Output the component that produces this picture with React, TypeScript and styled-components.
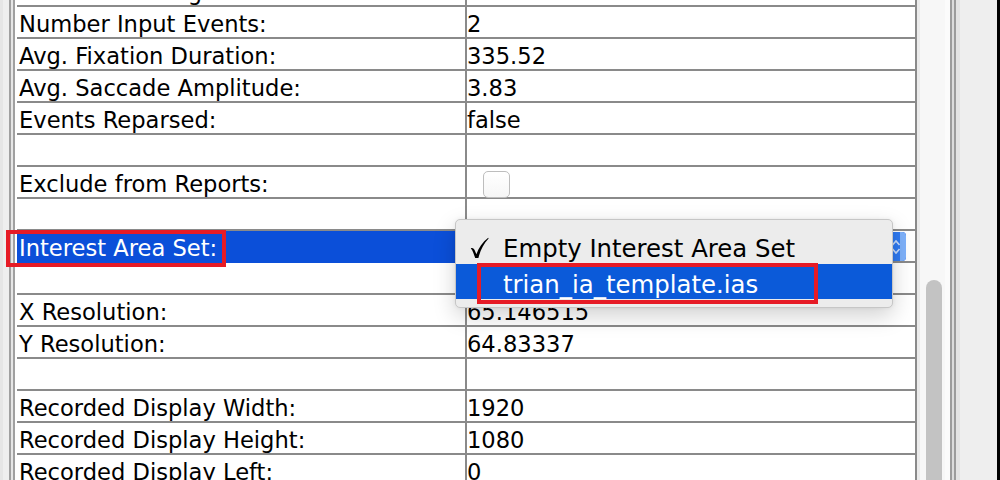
import React from "react";
import styled, { createGlobalStyle } from "styled-components";

const Global = createGlobalStyle`
  html, body { margin: 0; padding: 0; background: #ffffff; }
  body { font-family: "DejaVu Sans", "Liberation Sans", sans-serif; }
`;

const Screen = styled.div`
  position: relative;
  width: 1000px;
  height: 480px;
  overflow: hidden;
  display: flex;
  background: #ffffff;
  font-family: "DejaVu Sans", "Liberation Sans", sans-serif;
`;

const Gutter = styled.div`
  flex: 0 0 17px;
  background: linear-gradient(
    to right,
    #e5e5e5 0 3px,
    #eeeeee 3px 9px,
    #a0a0a0 9px 11px,
    #e6e6e6 11px 13px,
    #a0a0a0 13px 15px,
    #ffffff 15px 17px
  );
`;

const Viewport = styled.div`
  flex: 0 0 900px;
  overflow: hidden;
`;

const Table = styled.div`
  margin-top: -25px;
  display: flex;
  flex-direction: column;
`;

const Row = styled.div`
  display: grid;
  grid-template-columns: 450px 450px;
  height: 32px;
  box-sizing: border-box;
  border-bottom: 2px solid #8a8a8a;
`;

const LabelCell = styled.div<{ $selected?: boolean }>`
  box-sizing: border-box;
  height: 32px;
  margin-bottom: -2px;
  border-right: 2px solid #8a8a8a;
  padding: 2px 0 0 2px;
  font-size: 22.6px;
  line-height: 30px;
  white-space: nowrap;
  overflow: hidden;
  color: ${(p) => (p.$selected ? "#ffffff" : "#000000")};
  background: ${(p) => (p.$selected ? "#0b4fd9" : "transparent")};
`;

const ValueCell = styled.div`
  box-sizing: border-box;
  height: 30px;
  border-right: 2px solid #8a8a8a;
  padding: 2px 0 0 0;
  font-size: 22.6px;
  line-height: 30px;
  white-space: nowrap;
  color: #000000;
  display: flex;
  align-items: flex-start;
`;

const Checkbox = styled.div`
  margin: 2px 0 0 16px;
  width: 27px;
  height: 27px;
  box-sizing: border-box;
  border: 1px solid #bdbdbd;
  border-radius: 5px;
  background: linear-gradient(#ffffff, #f6f6f6);
  position: relative;
  z-index: 1;
`;

const Combo = styled.div`
  margin: -1px 0 0 4px;
  width: 435px;
  height: 29px;
  display: flex;
  border-radius: 4px;
  overflow: hidden;
  background: #0b4fd9;
`;

const ComboBody = styled.div`
  flex: 1;
`;

const ComboArrows = styled.div`
  flex: 0 0 20px;
  display: flex;
  align-items: center;
  justify-content: center;
  background: linear-gradient(to right, #2f7af2 0 70%, #7fb2fb 70% 100%);
`;

const ScrollTrack = styled.div`
  flex: 0 0 33px;
  background: linear-gradient(
    to right,
    #ebebeb 0 3px,
    #f7f7f7 3px 28px,
    #fbfbfb 28px 33px
  );
  display: flex;
  flex-direction: column;
`;

const Thumb = styled.div`
  margin: 280px 0 0 9px;
  width: 16px;
  flex: 1;
  border-radius: 8px 8px 0 0;
  background: #c3c3c3;
`;

const SidePane = styled.div`
  flex: 1;
  background: linear-gradient(
    to right,
    #9c9c9c 0 2px,
    #dcdcdc 2px 4px,
    #9c9c9c 4px 6px,
    #e4e4e4 6px 10px,
    #eeeeee 10px 47px,
    #000000 47px 50px
  );
`;

const Popup = styled.div`
  position: absolute;
  left: 455px;
  top: 219px;
  width: 438px;
  box-sizing: border-box;
  padding: 5px 0 8px;
  background: #ececec;
  border: 1px solid #c6c6c6;
  border-radius: 5px;
  box-shadow: 0 8px 22px rgba(0, 0, 0, 0.18), 0 0 4px rgba(0, 0, 0, 0.06);
  font-family: "DejaVu Sans", "Liberation Sans", sans-serif;
  z-index: 5;
`;

const MenuItem = styled.div<{ $active?: boolean }>`
  display: flex;
  box-sizing: border-box;
  height: ${(p) => (p.$active ? "35px" : "39px")};
  padding: ${(p) => (p.$active ? "3px" : "4px")} 0 0 14px;
  line-height: ${(p) => (p.$active ? "35px" : "39px")};
  font-size: 24.4px;
  white-space: nowrap;
  color: ${(p) => (p.$active ? "#ffffff" : "#000000")};
  background: ${(p) => (p.$active ? "#0b5ad9" : "transparent")};
`;

const CheckSlot = styled.span`
  flex: 0 0 33px;
  display: flex;
  align-items: flex-start;
  padding-top: 8px;
  box-sizing: border-box;
`;

const Annotation = styled.div<{ $l: number; $t: number; $w: number; $h: number }>`
  position: absolute;
  left: ${(p) => p.$l}px;
  top: ${(p) => p.$t}px;
  width: ${(p) => p.$w}px;
  height: ${(p) => p.$h}px;
  box-sizing: border-box;
  border: 4px solid #e61b26;
  z-index: 10;
  pointer-events: none;
`;

type RowData = {
  label?: string;
  value?: string;
  kind?: "checkbox" | "combo";
  selected?: boolean;
};

const rows: RowData[] = [
  { label: "Number Messages:", value: "0" },
  { label: "Number Input Events:", value: "2" },
  { label: "Avg. Fixation Duration:", value: "335.52" },
  { label: "Avg. Saccade Amplitude:", value: "3.83" },
  { label: "Events Reparsed:", value: "false" },
  {},
  { label: "Exclude from Reports:", kind: "checkbox" },
  {},
  { label: "Interest Area Set:", kind: "combo", selected: true },
  {},
  { label: "X Resolution:", value: "65.146515" },
  { label: "Y Resolution:", value: "64.83337" },
  {},
  { label: "Recorded Display Width:", value: "1920" },
  { label: "Recorded Display Height:", value: "1080" },
  { label: "Recorded Display Left:", value: "0" },
];

function Chevrons() {
  return (
    <svg width="10" height="18" viewBox="0 0 10 18">
      <path d="M1.5 7 L5 3 L8.5 7" fill="none" stroke="rgba(255,255,255,0.75)" strokeWidth="1.6" />
      <path d="M1.5 11 L5 15 L8.5 11" fill="none" stroke="rgba(255,255,255,0.75)" strokeWidth="1.6" />
    </svg>
  );
}

function CheckMark() {
  return (
    <svg width="19" height="22" viewBox="0 0 19 22">
      <path
        d="M0.8 11.2 C2.8 10.4 4 11.6 4.8 13.4 L6.4 17.2 C8.8 10.8 12.4 5.4 18.2 0.8 L18.6 1.4 C13.6 6.8 10.4 12.8 8.4 21 L5.2 21 L3.2 15.6 C2.6 13.9 1.9 12.4 0.8 11.2 Z"
        fill="#000000"
      />
    </svg>
  );
}

export default function App() {
  return (
    <>
      <Global />
      <Screen>
        <Gutter />
        <Viewport>
          <Table>
            {rows.map((r, i) => (
              <Row key={i}>
                <LabelCell $selected={r.selected}>{r.label ?? ""}</LabelCell>
                <ValueCell>
                  {r.kind === "checkbox" ? (
                    <Checkbox />
                  ) : r.kind === "combo" ? (
                    <Combo>
                      <ComboBody />
                      <ComboArrows>
                        <Chevrons />
                      </ComboArrows>
                    </Combo>
                  ) : (
                    r.value ?? ""
                  )}
                </ValueCell>
              </Row>
            ))}
          </Table>
        </Viewport>
        <ScrollTrack>
          <Thumb />
        </ScrollTrack>
        <SidePane />
        <Popup>
          <MenuItem>
            <CheckSlot>
              <CheckMark />
            </CheckSlot>
            <span>Empty Interest Area Set</span>
          </MenuItem>
          <MenuItem $active>
            <CheckSlot />
            <span>trian_ia_template.ias</span>
          </MenuItem>
        </Popup>
        <Annotation $l={6} $t={230} $w={220} $h={37} />
        <Annotation $l={477} $t={263} $w={341} $h={41} />
      </Screen>
    </>
  );
}
